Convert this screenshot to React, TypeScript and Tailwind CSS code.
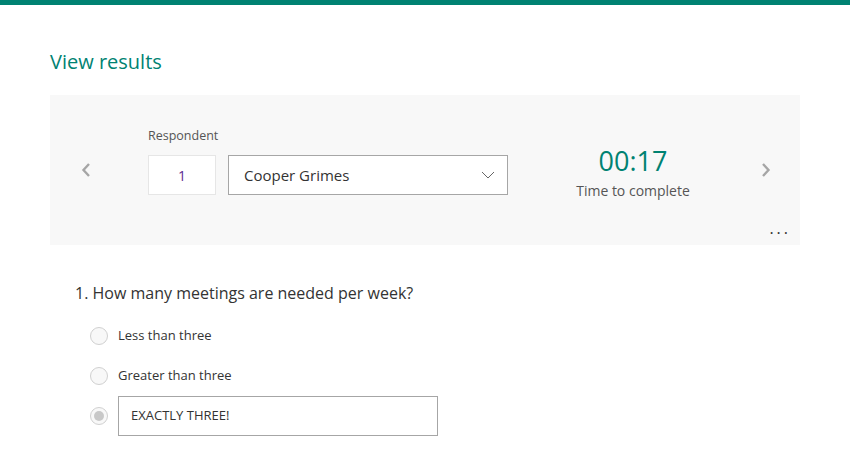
export default function App() {
  return (
    <div className="min-h-[470px] w-[850px] bg-white text-[#333]" style={{ fontFamily: '"Open Sans", "Noto Sans", sans-serif' }}>
      <div className="h-[5px] bg-[#008272]" />
      <div className="px-[50px]">
        <h1 className="pt-[43px] text-[20px] leading-[28px] text-[#008272]">View results</h1>

        <div className="relative mt-[19px] flex h-[150px] items-start bg-[#f8f8f8]">
          <button className="ml-[28px] mt-[63px] flex h-[24px] w-[16px] items-center justify-center text-[#a6a6a6]">
            <svg width="10" height="16" viewBox="0 0 10 16" fill="none">
              <path d="M8 2 L2.5 8 L8 14" stroke="currentColor" strokeWidth="2.4" />
            </svg>
          </button>

          <div className="ml-[54px] mt-[33px] flex flex-col">
            <span className="mb-[11px] text-[12.5px] leading-[16px] text-[#555]">Respondent</span>
            <div className="flex gap-[12px]">
              <div className="flex h-[40px] w-[68px] items-center justify-center border border-[#e6e6e6] bg-white text-[14px] text-[#5c2d91]">1</div>
              <div className="flex h-[40px] w-[280px] items-center justify-between border border-[#a6a6a6] bg-white pl-[15px] pr-[12px] text-[15px]">
                <span>Cooper Grimes</span>
                <svg width="14" height="8" viewBox="0 0 14 8" fill="none">
                  <path d="M1 1 L7 7 L13 1" stroke="#666" strokeWidth="1" />
                </svg>
              </div>
            </div>
          </div>

          <div className="ml-[60px] mt-[49px] flex w-[130px] flex-col items-center">
            <span className="text-[27px] leading-[34px] text-[#008272]">00:17</span>
            <span className="mt-[4px] text-[14px] leading-[18px] text-[#555]">Time to complete</span>
          </div>

          <button className="ml-[60px] mt-[63px] flex h-[24px] w-[16px] items-center justify-center text-[#a6a6a6]">
            <svg width="10" height="16" viewBox="0 0 10 16" fill="none">
              <path d="M2 2 L7.5 8 L2 14" stroke="currentColor" strokeWidth="2.4" />
            </svg>
          </button>

          <span className="absolute bottom-[10px] right-[9px] text-[16px] leading-[14px] tracking-[3px] text-[#333]">...</span>
        </div>

        <div className="pl-[25px] pt-[37px]">
          <p className="text-[16px] leading-[22px]">1. How many meetings are needed per week?</p>
          <div className="mt-[21px] flex flex-col pl-[15px]">
            <label className="flex h-[22px] items-center gap-[10px]">
              <span className="h-[18px] w-[18px] rounded-full border border-[#d0d0d0] bg-[#f8f8f8]" />
              <span className="text-[13px]">Less than three</span>
            </label>
            <label className="mt-[18px] flex h-[22px] items-center gap-[10px]">
              <span className="h-[18px] w-[18px] rounded-full border border-[#d0d0d0] bg-[#f8f8f8]" />
              <span className="text-[13px]">Greater than three</span>
            </label>
            <label className="mt-[9px] flex items-center gap-[10px]">
              <span className="flex h-[18px] w-[18px] items-center justify-center rounded-full border border-[#d0d0d0] bg-[#f8f8f8]">
                <span className="h-[10px] w-[10px] rounded-full bg-[#c8c8c8]" />
              </span>
              <span className="flex h-[40px] w-[320px] items-center border border-[#a6a6a6] px-[12px] text-[13px]">EXACTLY THREE!</span>
            </label>
          </div>
        </div>
      </div>
    </div>
  );
}
